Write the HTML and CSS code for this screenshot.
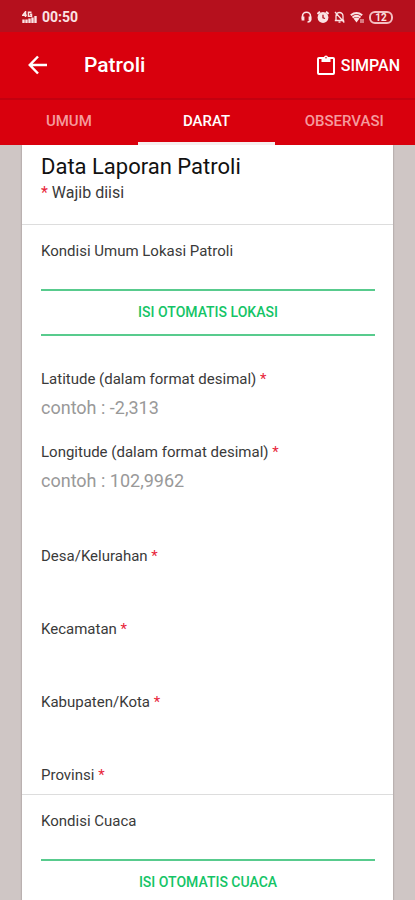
FILE: index.html
```html
<!DOCTYPE html>
<html lang="id">
<head>
<meta charset="utf-8">
<meta name="viewport" content="width=device-width, initial-scale=1">
<title>Patroli</title>
<link rel="stylesheet" href="styles.css">
</head>
<body>
<div class="app">
  <div class="status">
    <div class="status-left">
      <svg class="signal" width="15" height="12" viewBox="0 0 15 12" fill="none" stroke="currentColor" stroke-width="1.5">
        <path d="M3.500 6V.8L.8 4.300h4M9.500 1.200h-3v4h3V3.300H8"/>
        <path stroke-width="2.400" d="M1.500 8.500V12M4.500 8.500V12M7.500 7.500V12M10.500 6.500V12M13.500 5V12"/>
      </svg>
      <span class="clock">00:50</span>
    </div>
    <div class="status-right">
      <svg width="11" height="12" viewBox="0 0 11 12" fill="none" stroke="currentColor" stroke-width="1.600">
        <path d="M1.500 8V5.200a4 4 0 0 1 8 0v3c0 2-1.200 2.800-3 2.800"/>
        <path stroke-width="2.800" d="M2 5.500v4M9 5.500v4"/>
      </svg>
      <svg width="12" height="12" viewBox="0 0 12 12">
        <circle cx="6" cy="6.500" r="5.400" fill="currentColor"/>
        <path d="M.5 3 3 .7M11.500 3 9 .7" stroke="currentColor" stroke-width="2"/>
        <path d="M6 3.800v3l2 .7" fill="none" stroke="#b5101d" stroke-width="1.300"/>
      </svg>
      <svg width="11" height="12" viewBox="0 0 11 12" fill="none" stroke="currentColor" stroke-width="1.300">
        <path d="M2 9.300V5a3.500 3.500 0 0 1 7 0v4.300M.8 9.500h9.400M4.500 11.200h2M1 1l9.300 10.500"/>
      </svg>
      <svg width="14" height="12" viewBox="0 0 14 12">
        <path d="M6.500 11.500 3.500 7.500q3-2 6 0z" fill="currentColor"/>
        <path d="M.8 4.200q5.700-4.500 11.400 0M2.500 6.500q4-3.200 8 0" fill="none" stroke="currentColor" stroke-width="2"/>
        <path d="M11 8v4M13 8v4" stroke="currentColor" stroke-width="1"/>
      </svg>
      <span class="battery">12</span>
    </div>
  </div>

  <header class="appbar">
    <button class="back" type="button" aria-label="Kembali">
      <svg width="20" height="20" viewBox="0 0 20 20" fill="none" stroke="currentColor" stroke-width="2.500">
        <path d="M19 10H2.500M10 1.500 1.800 10l8.200 8.500"/>
      </svg>
    </button>
    <h1 class="appbar-title">Patroli</h1>
    <button class="save" type="button">
      <svg width="18" height="20" viewBox="0 0 18 20">
        <rect x="1" y="3" width="16" height="16" rx="1" fill="none" stroke="currentColor" stroke-width="2"/>
        <path d="M4.500 2.500H7a2 2 0 0 1 4 0h2.500V7h-9z" fill="currentColor"/>
        <circle cx="9" cy="2.800" r=".8" fill="#d9000d"/>
      </svg>
      <span>SIMPAN</span>
    </button>
  </header>

  <nav class="tabs">
    <a class="tab" href="#umum">UMUM</a>
    <a class="tab tab-active" href="#darat" aria-current="page">DARAT</a>
    <a class="tab" href="#observasi">OBSERVASI</a>
  </nav>

  <main class="content">
    <form class="card">
      <section class="intro">
        <h2 class="title">Data Laporan Patroli</h2>
        <p class="text note"><span class="req">*</span> Wajib diisi</p>
      </section>
      <section class="section">
        <h3 class="text">Kondisi Umum Lokasi Patroli</h3>
        <button class="auto" type="button">ISI OTOMATIS LOKASI</button>
        <div class="group">
          <div class="field">
            <label class="text" for="lat">Latitude (dalam format desimal) <span class="req">*</span></label>
            <input class="input" id="lat" placeholder="contoh : -2,313">
          </div>
          <div class="field">
            <label class="text" for="lng">Longitude (dalam format desimal) <span class="req">*</span></label>
            <input class="input" id="lng" placeholder="contoh : 102,9962">
          </div>
        </div>
        <div class="group">
          <div class="field">
            <label class="text" for="desa">Desa/Kelurahan <span class="req">*</span></label>
            <input class="input" id="desa">
          </div>
          <div class="field">
            <label class="text" for="kec">Kecamatan <span class="req">*</span></label>
            <input class="input" id="kec">
          </div>
          <div class="field">
            <label class="text" for="kab">Kabupaten/Kota <span class="req">*</span></label>
            <input class="input" id="kab">
          </div>
          <p class="text">Provinsi <span class="req">*</span></p>
        </div>
      </section>
      <section class="section">
        <h3 class="text">Kondisi Cuaca</h3>
        <button class="auto" type="button">ISI OTOMATIS CUACA</button>
      </section>
    </form>
  </main>
</div>
</body>
</html>
```
FILE: styles.css
```css
* { box-sizing: border-box; }

body {
  margin: 0;
  font-family: Roboto, "Liberation Sans", sans-serif;
  color: #3a3a3a;
}

h1, h2, h3, p { margin: 0; font-weight: 400; }

button {
  border: 0;
  padding: 0;
  background: none;
  font-family: inherit;
  color: inherit;
}

svg { display: block; flex: none; }

.app {
  display: flex;
  flex-direction: column;
  height: 100vh;
  background: #cfc6c5;
}

.status {
  display: flex;
  flex: none;
  justify-content: space-between;
  align-items: center;
  height: 32px;
  padding: 2px 22px 0;
  background: #b5101d;
  color: #fbe3e4;
}

.status-left, .status-right { display: flex; align-items: center; gap: 5px; }

.clock { font-size: 14px; font-weight: 700; }

.battery {
  width: 24px;
  border: 2px solid #f3bfc2;
  border-radius: 6px;
  font-size: 10px;
  line-height: 9px;
  font-weight: 700;
  text-align: center;
}

.appbar {
  display: flex;
  flex: none;
  align-items: center;
  height: 66px;
  padding: 0 15px 0 28px;
  background: #d9000d;
  color: #fff;
}

.appbar-title {
  flex: 1;
  margin-left: 36px;
  font-size: 21px;
  font-weight: 500;
}

.save {
  display: flex;
  align-items: center;
  gap: 6px;
  font-size: 16px;
  font-weight: 500;
}

.tabs {
  display: flex;
  flex: none;
  height: 47px;
  padding-right: 2px;
  border-top: 2px solid #c3000f;
  background: #d9000d;
}

.tab {
  flex: 1;
  border-bottom: 3px solid transparent;
  line-height: 43px;
  font-size: 15px;
  font-weight: 500;
  text-align: center;
  text-decoration: none;
  color: #f59a9d;
}

.tab-active { border-color: #f6eeee; color: #fff; }

.content {
  flex: 1;
  min-height: 0;
  overflow-y: auto;
  scrollbar-width: none;
  padding: 0 22px;
}

.card {
  background: #fff;
  box-shadow: 0 0 2px #8f8787;
}

.intro { padding: 8px 18px 19px 19px; }

.title {
  font-size: 22px;
  line-height: 28px;
  color: #111;
}

.text {
  display: block;
  font-size: 15px;
  line-height: 24px;
}

.note { font-size: 16px; }

.req { color: #e8253a; }

.section {
  padding: 14px 18px 7px 19px;
  border-top: 1px solid #ddd;
}

.auto {
  display: block;
  width: 100%;
  height: 47px;
  margin-top: 26px;
  border-top: 2px solid #58cb8d;
  border-bottom: 2px solid #58cb8d;
  padding-bottom: 2px;
  font-size: 14px;
  font-weight: 500;
  color: #14c466;
}

.group { padding-top: 31px; }

.field { height: 73px; }

.input {
  display: block;
  width: 100%;
  height: 32px;
  border: 0;
  padding: 0;
  background: none;
  font-family: inherit;
  font-size: 18px;
  color: #333;
}

.input::placeholder { color: #999; }
```
